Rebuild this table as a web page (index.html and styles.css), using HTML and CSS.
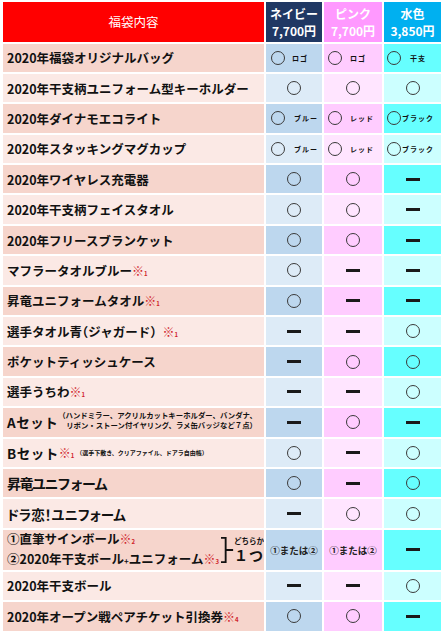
FILE: index.html
```html
<!DOCTYPE html>
<html lang="ja">
<head>
<meta charset="utf-8">
<link rel="stylesheet" href="styles.css">
</head>
<body>
<div class="tbl">
  <div class="row head">
    <div class="c h-title">福袋内容</div>
    <div class="c hc hn"><span>ネイビー</span><span>7,700円</span></div>
    <div class="c hc hp"><span>ピンク</span><span>7,700円</span></div>
    <div class="c hc hs"><span>水色</span><span>3,850円</span></div>
  </div>

  <div class="row d">
    <div class="c lbl">2020年福袋オリジナルバッグ</div>
    <div class="c n cl"><i class="o"></i><span class="tag g7">ロゴ</span></div>
    <div class="c p cl"><i class="o"></i><span class="tag g8">ロゴ</span></div>
    <div class="c s cl"><i class="o"></i><span class="tag g9">干支</span></div>
  </div>
  <div class="row l">
    <div class="c lbl">2020年干支柄ユニフォーム型キーホルダー</div>
    <div class="c n"><i class="o"></i></div>
    <div class="c p"><i class="o"></i></div>
    <div class="c s"><i class="o"></i></div>
  </div>
  <div class="row d">
    <div class="c lbl">2020年ダイナモエコライト</div>
    <div class="c n cl"><i class="o"></i><span class="tag g10">ブルー</span></div>
    <div class="c p cl"><i class="o"></i><span class="tag g8">レッド</span></div>
    <div class="c s cl"><i class="o"></i><span class="tag g0">ブラック</span></div>
  </div>
  <div class="row l">
    <div class="c lbl">2020年スタッキングマグカップ</div>
    <div class="c n cl"><i class="o"></i><span class="tag g10">ブルー</span></div>
    <div class="c p cl"><i class="o"></i><span class="tag g8">レッド</span></div>
    <div class="c s cl"><i class="o"></i><span class="tag g0">ブラック</span></div>
  </div>
  <div class="row d">
    <div class="c lbl">2020年ワイヤレス充電器</div>
    <div class="c n"><i class="o"></i></div>
    <div class="c p"><i class="o"></i></div>
    <div class="c s"><i class="x"></i></div>
  </div>
  <div class="row l">
    <div class="c lbl">2020年干支柄フェイスタオル</div>
    <div class="c n"><i class="o"></i></div>
    <div class="c p"><i class="o"></i></div>
    <div class="c s"><i class="x"></i></div>
  </div>
  <div class="row d">
    <div class="c lbl">2020年フリースブランケット</div>
    <div class="c n"><i class="o"></i></div>
    <div class="c p"><i class="o"></i></div>
    <div class="c s"><i class="x"></i></div>
  </div>
  <div class="row l">
    <div class="c lbl">マフラータオルブルー<span class="kome">※<small>1</small></span></div>
    <div class="c n"><i class="o"></i></div>
    <div class="c p"><i class="x"></i></div>
    <div class="c s"><i class="x"></i></div>
  </div>
  <div class="row d">
    <div class="c lbl">昇竜ユニフォームタオル<span class="kome">※<small>1</small></span></div>
    <div class="c n"><i class="o"></i></div>
    <div class="c p"><i class="x"></i></div>
    <div class="c s"><i class="x"></i></div>
  </div>
  <div class="row l">
    <div class="c lbl">選手タオル青<span class="par">（</span>ジャガード<span class="par">）</span><span class="kome sp">※<small>1</small></span></div>
    <div class="c n"><i class="x"></i></div>
    <div class="c p"><i class="x"></i></div>
    <div class="c s"><i class="o"></i></div>
  </div>
  <div class="row d">
    <div class="c lbl">ポケットティッシュケース</div>
    <div class="c n"><i class="x"></i></div>
    <div class="c p"><i class="o"></i></div>
    <div class="c s"><i class="o"></i></div>
  </div>
  <div class="row l">
    <div class="c lbl">選手うちわ<span class="kome">※<small>1</small></span></div>
    <div class="c n"><i class="x"></i></div>
    <div class="c p"><i class="x"></i></div>
    <div class="c s"><i class="o"></i></div>
  </div>
  <div class="row d">
    <div class="c lbl">
      <span class="big">Aセット</span>
      <span class="memo"><span>（ハンドミラー、アクリルカットキーホルダー、バンダナ、</span><span>リボン・ストーン付イヤリング、ラメ缶バッジなど７点）</span></span>
    </div>
    <div class="c n"><i class="x"></i></div>
    <div class="c p"><i class="o"></i></div>
    <div class="c s"><i class="x"></i></div>
  </div>
  <div class="row l">
    <div class="c lbl">
      <span class="big">Bセット</span><span class="kome">※<small>1</small></span>
      <span class="memo1">（選手下敷き、クリアファイル、ドアラ自由帳）</span>
    </div>
    <div class="c n"><i class="o"></i></div>
    <div class="c p"><i class="x"></i></div>
    <div class="c s"><i class="o"></i></div>
  </div>
  <div class="row d">
    <div class="c lbl"><span class="big2">昇竜ユニフォーム</span></div>
    <div class="c n"><i class="o"></i></div>
    <div class="c p"><i class="x"></i></div>
    <div class="c s"><i class="o"></i></div>
  </div>
  <div class="row l">
    <div class="c lbl"><span class="big3">ドラ恋！ユニフォーム</span></div>
    <div class="c n"><i class="x"></i></div>
    <div class="c p"><i class="o"></i></div>
    <div class="c s"><i class="o"></i></div>
  </div>
  <div class="row d tall">
    <div class="c lbl dbl">
      <div class="lines">
        <span>①直筆サインボール<span class="kome">※<small>2</small></span></span>
        <span>②2020年干支ボール<span class="plus">+</span>ユニフォーム<span class="kome">※<small>3</small></span></span>
      </div>
      <svg class="brk" width="14" height="30" viewBox="0 0 14 30"><path d="M0 2 H5 V28 H0 M5 15 H13" fill="none" stroke="#111" stroke-width="2"/></svg>
      <div class="choice"><span class="ch1">どちらか</span><span class="ch2">１つ</span></div>
    </div>
    <div class="c n or">①または②</div>
    <div class="c p or">①または②</div>
    <div class="c s"><i class="x"></i></div>
  </div>
  <div class="row l">
    <div class="c lbl">2020年干支ボール</div>
    <div class="c n"><i class="x"></i></div>
    <div class="c p"><i class="x"></i></div>
    <div class="c s"><i class="o"></i></div>
  </div>
  <div class="row d">
    <div class="c lbl">2020年オープン戦ペアチケット引換券<span class="kome">※<small>4</small></span></div>
    <div class="c n"><i class="o"></i></div>
    <div class="c p"><i class="o"></i></div>
    <div class="c s"><i class="x"></i></div>
  </div>
</div>
</body>
</html>
```

FILE: styles.css
```css
* { box-sizing: border-box; }
body {
  margin: 0;
  background: #fff;
  font-family: "Noto Sans CJK JP", "Noto Sans", sans-serif;
  color: #111;
}
.tbl {
  display: flex;
  flex-direction: column;
  gap: 2px;
  padding: 2px 3px 0;
}
.row {
  display: grid;
  grid-template-columns: 261px 56px 58px 57px;
  column-gap: 2px;
  height: 28.4px;
}
.row.head { height: 39.5px; }
.row.tall { height: 40px; }
.c {
  display: flex;
  align-items: center;
  justify-content: center;
  min-width: 0;
}
.h-title {
  background: #ff0000;
  color: #fff;
  font-size: 12.5px;
}
.hc {
  flex-direction: column;
  color: #fff;
  font-weight: 700;
  font-size: 12px;
  line-height: 17px;
  padding-top: 1px;
}
.hn { background: #203864; }
.hp { background: #ff99ff; }
.hs { background: #00b0f0; }

.d .lbl { background: #f6d5cc; }
.l .lbl { background: #fbe9e5; }
.d .n { background: #bdd7ee; }
.l .n { background: #ddebf7; }
.d .p { background: #ffccff; }
.l .p { background: #ffe5ff; }
.d .s { background: #66ffff; }
.l .s { background: #ccffff; }

.lbl {
  justify-content: flex-start;
  padding-left: 4px;
  font-size: 12.5px;
  font-weight: 700;
  white-space: nowrap;
  overflow: hidden;
}
.kome {
  color: #d0242b;
  font-size: 12px;
  font-weight: 700;
}
.kome small {
  font-size: 6px;
  font-weight: 700;
}
.par { font-feature-settings: "halt"; }
.kome.sp { margin-left: 6px; }

.o {
  display: block;
  width: 14px;
  height: 14px;
  border: 1px solid #3a3a3a;
  border-radius: 50%;
}
.x {
  display: block;
  width: 14px;
  height: 3px;
  background: #1a1a1a;
}
.cl { justify-content: flex-start; }
.n.cl { padding-left: 5px; }
.p.cl { padding-left: 4px; }
.s.cl { padding-left: 3px; }
.tag {
  font-size: 7px;
  font-weight: 700;
  letter-spacing: 1px;
  color: #111;
}
.g0 { margin-left: 1px; }
.g7 { margin-left: 7px; }
.g8 { margin-left: 8px; }
.g9 { margin-left: 9px; }
.g10 { margin-left: 9px; }

.big {
  font-size: 13.5px;
  letter-spacing: 0.5px;
}
.memo {
  display: flex;
  flex-direction: column;
  align-items: flex-end;
  font-size: 7.4px;
  line-height: 10px;
  margin-left: 0;
  margin-top: -4px;
}
.memo1 {
  font-size: 6px;
  margin-left: 2px;
}
.big2 {
  font-size: 14px;
  letter-spacing: -1.5px;
}
.big3 {
  font-size: 13.5px;
  font-feature-settings: "palt";
}

.dbl { padding-left: 4px; }
.lines {
  display: flex;
  flex-direction: column;
  font-size: 12.5px;
  line-height: 17px;
}
.plus { font-size: 8px; }
.brk { margin-left: 2px; }
.choice {
  display: flex;
  flex-direction: column;
  align-items: center;
  margin-left: 0;
}
.ch1 { font-size: 7.5px; line-height: 10px; }
.ch2 { font-size: 14px; line-height: 18px; letter-spacing: 1px; }
.or {
  font-size: 9.5px;
  font-weight: 700;
  color: #222;
}
```
